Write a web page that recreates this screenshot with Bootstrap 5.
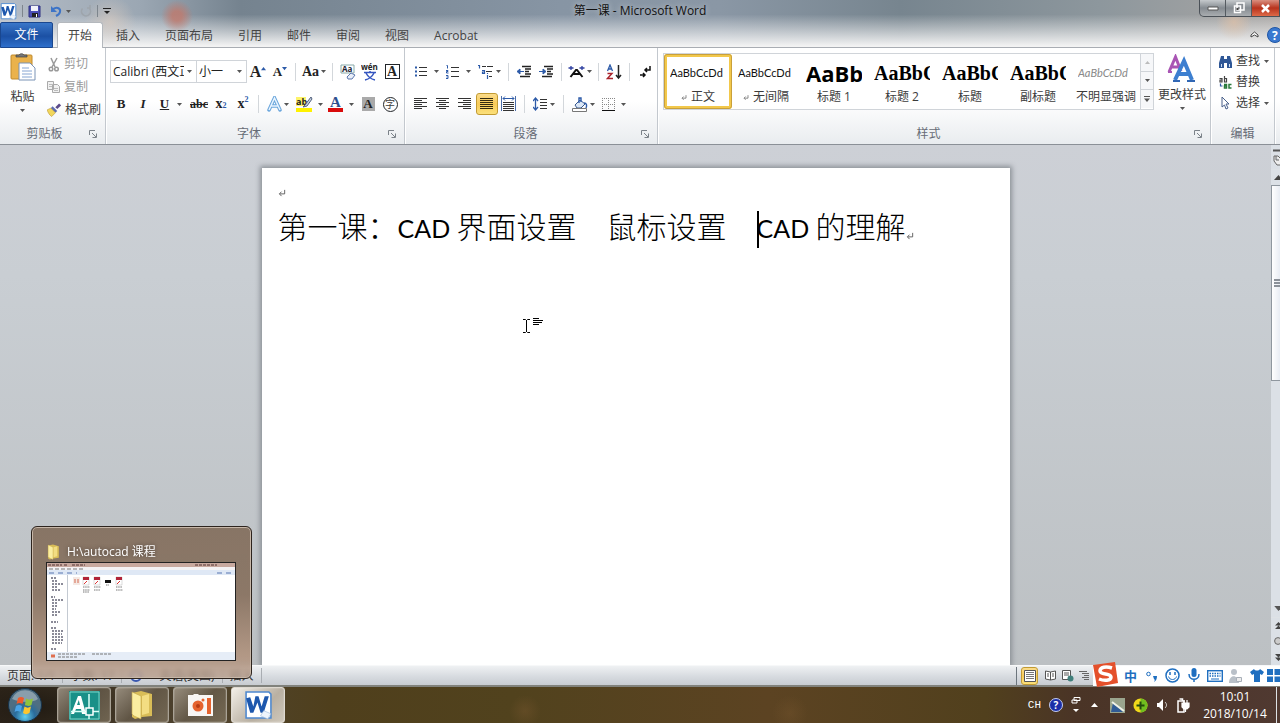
<!DOCTYPE html>
<html lang="zh-CN">
<head>
<meta charset="utf-8">
<meta name="viewport" content="width=device-width, initial-scale=1">
<title>第一课 - Microsoft Word</title>
<link rel="stylesheet" href="https://cdn.jsdelivr.net/npm/bootstrap@5.3.0/dist/css/bootstrap.min.css">
<style>
body{font:12px/16px "Open Sans","Noto Sans CJK SC",sans-serif;color:#3b3b3b;background:#c4c8cd}
button{font:inherit;color:inherit;background:none;border:0;padding:0;white-space:nowrap}
svg{display:block;flex:none}
.chrome{background:
 radial-gradient(circle 16px at 177px 16px,#c0796ccc 30%,transparent),
 radial-gradient(circle 26px at 110px 22px,#d9cbc0aa,transparent),
 radial-gradient(circle 18px at 1234px 22px,#e0c0a5aa,transparent),
 linear-gradient(#fff0 30%,#f3f3f3 96%),
 linear-gradient(90deg,#b4bcc6 0,#9ba7b3 140px,#75838f 240px,#8795a4 560px,#8a97a5 720px,#77858f 900px,#8d979d 1100px,#a9a6a4 100%)}
.titlebar{height:22px}
.qat{gap:5px}
.qat .split{width:1px;height:12px;background:#7d858d}
.title-text{text-shadow:0 0 6px #fff9;color:#111}
.win-ctl{height:17px;border:1px solid #4b5158;border-top:0;border-radius:0 0 0 5px;overflow:hidden;background:linear-gradient(#c5c9cc,#858b91 50%,#a9adb0)}
.win-ctl button{width:26px;height:16px;border-right:1px solid #555b61}
.win-ctl button.shut{width:27px;border:0;background:linear-gradient(#d98f80,#b8331d 50%,#dd6a48)}
.tabs-row{height:26px;border-bottom:1px solid #a9adb3;gap:1px}
.tabs-row .tab{height:26px;padding:2px 12px 0;color:#444}
.tabs-row .file{background:linear-gradient(#3a77c9,#1b50a4 55%,#2e6fcb);color:#fff;width:53px;border-radius:2px 2px 0 0;padding:0;border:1px solid #1a478f}
.tabs-row .on{background:#fff;border:1px solid #b4b8bd;border-bottom:0;border-radius:3px 3px 0 0;width:46px;padding:0;margin-left:3px}
.ribbon{height:97px;background:linear-gradient(#fff 0,#fff 55%,#e9ecef 100%);border-bottom:1px solid #8b9097;overflow:hidden}
.grp{border-right:1px solid #c3c8ce;box-shadow:1px 0 #fff}
.grp-name{height:18px;color:#666c76}
.launch{width:16px;height:16px}
.ic{width:22px;height:22px}
.ic2{width:32px;height:22px;gap:2px}
.ic,.ic2{display:flex;align-items:center;justify-content:center;flex:none}
.w28{width:28px}.w30{width:30px}
.vr-s{width:1px;height:18px;background:#d3d7db;flex:none}
.pressed{background:linear-gradient(#fbdc8b,#f8cb58 50%,#fbe07b);border:1px solid #c29b33;border-radius:3px}
.serif{font-family:"Liberation Serif","Noto Sans CJK SC",serif;font-weight:700;color:#222}
.combo{appearance:none;height:23px;border:1px solid #d0d4d9;background:#fff url("data:image/svg+xml,%3Csvg xmlns='http://www.w3.org/2000/svg' width='5' height='3'%3E%3Cpath d='M0 0h5L2.500 3z' fill='%23555'/%3E%3C/svg%3E") no-repeat right 4px center;padding:0 12px 0 2px;font:inherit;color:#222;border-radius:0}
.dim{color:#9a9a9a}
.gallery{height:57px;border:1px solid #d0d4d9;background:#fff;margin-top:5px}
.sty{width:68px;height:55px;padding:5px 6px 4px;display:flex;flex-direction:column;align-items:center;justify-content:space-between;overflow:hidden}
.sty b,.sty i,.sty .pv{display:flex;align-items:center;width:56px;height:27px;overflow:hidden;font-family:Lato,sans-serif;font-size:11px;color:#111;font-weight:400}
.sty .h1p{font-family:"Open Sans",sans-serif;font-weight:700;font-size:22px;color:#000}
.sty .h2p{font-family:"Liberation Serif",serif;font-weight:700;font-size:20px;color:#000}
.sty i{color:#888}
.sty.sel{border:3px solid #f2c84b;outline:1px solid #c9a03a;outline-offset:-1px;border-radius:3px;padding:2px 3px 1px}
.gal-nav{width:13px;border-left:1px solid #d0d4d9}
.gal-nav button{height:18px;border-bottom:1px solid #d0d4d9;background:#f6f7f9}
.gal-nav button:last-child{border:0}
.work{background:linear-gradient(#cdd0d6,#c9ced3 25%,#bcc0c3);min-height:0}
.sheet{max-width:748px;margin:23px auto 0;background:#fff;box-shadow:0 0 5px 2px #8b9096;padding:16px}
.doc-line{font:300 30px/42px "Noto Sans CJK SC",sans-serif;color:#000;white-space:nowrap;margin:4px 0 0}
.doc-line .lat{font-family:Lato,sans-serif;font-size:25px;font-weight:400}
.ins{display:inline-block;width:2px;height:37px;background:#000;vertical-align:middle;margin-right:-2px}
.pm{display:inline-block;vertical-align:-2px}
.ibeam{position:absolute;left:260px;top:148px}
.vscroll{width:9px;background:#dbe0e6;overflow:hidden;flex:none}
.vscroll .thumb{height:196px;border:1px solid #8f979f;border-right:0;background:linear-gradient(90deg,#fff,#e8ecf3)}
.sb{width:14px;display:flex;align-items:center;justify-content:center;flex:none}
.status{height:20px;background:linear-gradient(#eff1f3,#d5d9de 60%,#c8ccd1);border-top:1px solid #f7f8f9;color:#333}
.status .cell{padding:0 7px;border-right:1px solid #a9adb2;height:15px;display:flex;align-items:center}
.vw{width:17px;height:18px;display:flex;align-items:center;justify-content:center}
.ime{background:#fff;height:20px;width:187px;color:#1f6fc0;padding-left:27px}
.ime button{width:21px;flex:none;display:flex;justify-content:center;font-size:14px;font-weight:700}
.sogou{position:absolute;left:-1px;top:-5px}
.taskbar{height:38px;background:
 radial-gradient(ellipse 90px 40px at 40px 20px,#0006,#0000),
 radial-gradient(circle 16px at 525px 24px,#7a583066,#0000),
 radial-gradient(circle 18px at 790px 26px,#7a583055,#0000),
 linear-gradient(90deg,#33291d 0,#50442f 16%,#4f3f1c 26%,#51421d 40%,#5c4322 60%,#51401d 77%,#4a3426 84%,#503931);
 border-top:2px solid #81827c;color:#fff}
.tk{width:54px;height:36px;border:1px solid #a9a295;border-radius:3px;background:linear-gradient(135deg,#aaa091cc,#6a5f4fbb 50%,#827661bb);display:flex;align-items:center;justify-content:center;box-shadow:inset 0 0 1px #fff}
.tk.cur{background:linear-gradient(135deg,#f3efe8,#b9b0a2 60%,#cfc8bb);border-color:#ded9d0}
.orb{width:49px}
.tray{gap:8px}
.clock{width:66px;line-height:17px}
.peek{position:absolute;left:31px;bottom:44px;width:221px;height:153px;border:1px solid #2d241e;border-radius:6px;box-shadow:inset 0 0 0 1px #c7b7a8;background:linear-gradient(#857262f8,#8b7564f8 45%,#b29683f8 85%,#b69d8bcc);backdrop-filter:blur(2px);padding:15px 14px;color:#fff}
.peek-name{text-shadow:0 0 4px #0008;height:20px;gap:6px}
.mini{border:1px solid #222;background:#fff;height:99px;width:190px}
</style>
</head>
<body class="d-flex flex-column vh-100 overflow-hidden position-relative">
<svg width="0" height="0" class="position-absolute">
 <symbol id="dn" viewBox="0 0 5 3"><path d="M0 0h5L2.500 3z" fill="#555"/></symbol>
 <symbol id="la" viewBox="0 0 8 8"><path d="M.5 5V.5H6M3 3l4 4M7.500 3.500v4h-4" fill="none" stroke="#7b8289"/></symbol>
 <symbol id="ret" viewBox="0 0 9 9"><path d="M7.500 1v4.500H2M4 3L1.500 5.500 4 8" fill="none" stroke="#555"/></symbol>
 <symbol id="fold" viewBox="0 0 24 30"><path d="M2 3l9-2 11 3v22l-10 1-7 2-3-2z" fill="#d9bd57"/><path d="M2 2l9 4v23l-7-3-2-2z" fill="#fbeea0" stroke="#c3a646" stroke-width=".6"/><path d="M12 6l7-2v19l-7 2z" fill="#f3dd82"/></symbol>
 <symbol id="word" viewBox="0 0 28 28"><path d="M2 1h22l2 2v23H2z" fill="#fff" stroke="#4d88cf" stroke-width="1.500"/><path d="M2 7l4 14h3l4-10 3 10h3l5-16h-4l-3 10-3-10h-3L9 15 6 6z" fill="#1d57ad"/><path d="M19 19l7 3-3 5-7-3z" fill="#eef4fb" stroke="#9db9dc" stroke-width=".6"/></symbol>
</svg>

<header class="chrome flex-shrink-0">
 <div class="titlebar d-flex align-items-start justify-content-between position-relative">
  <div class="qat d-flex align-items-center h-100">
   <svg width="17" height="17"><use href="#word"/></svg>
   <span class="split"></span>
   <button aria-label="保存"><svg width="13" height="13" viewBox="0 0 13 13"><path d="M1 1h11v11H1z" fill="#4b4fb5" stroke="#2d2f80"/><path d="M3 1h7v5H3z" fill="#f1f3fa"/><path d="M4 8h6v4H4z" fill="#222"/><path d="M8 9h1v3H8z" fill="#fff"/></svg></button>
   <button class="d-flex align-items-center gap-1 ms-1" aria-label="撤销"><svg width="12" height="12" viewBox="0 0 12 12"><path d="M2 5c4-4 9-2 8 2-.4 2-2 3-4 4" fill="none" stroke="#3d74c7" stroke-width="2"/><path d="M1 1v6h6z" fill="#3d74c7"/></svg><svg width="5" height="3"><use href="#dn"/></svg></button>
   <button class="ms-1" aria-label="重复"><svg width="12" height="12" viewBox="0 0 12 12"><path d="M2.500 3.500a4.500 4.500 0 1 0 7 0M7 3h3V0" fill="none" stroke="#9ea5ac" stroke-width="1.600"/></svg></button>
   <span class="split"></span>
   <button aria-label="自定义快速访问工具栏"><svg width="8" height="8" viewBox="0 0 8 8"><path d="M0 1.500h8" stroke="#222"/><path d="M1 4h6L4 7z" fill="#222"/></svg></button>
  </div>
  <div class="title-text position-absolute start-50 translate-middle-x" style="top:3px">第一课 - Microsoft Word</div>
  <div class="win-ctl d-flex">
   <button class="d-flex align-items-center justify-content-center" aria-label="最小化"><svg width="12" height="5" viewBox="0 0 12 5"><path d="M1 1h10v3H1z" fill="#fff" stroke="#555"/></svg></button>
   <button class="d-flex align-items-center justify-content-center" aria-label="还原"><svg width="12" height="12" viewBox="0 0 12 12"><path d="M4 1h7v7H4zM1.500 4h6v6.500h-6z" fill="#8a8f94" stroke="#fff" stroke-width="1.500"/><path d="M3.500 6h2v2h-2z" fill="#444"/></svg></button>
   <button class="shut d-flex align-items-center justify-content-center" aria-label="关闭"><svg width="11" height="9" viewBox="0 0 11 9"><path d="M2 1l7 7M9 1L2 8" stroke="#fff" stroke-width="2.500"/></svg></button>
  </div>
 </div>
 <nav class="tabs-row d-flex">
  <button class="tab file">文件</button>
  <button class="tab on">开始</button>
  <button class="tab">插入</button><button class="tab">页面布局</button><button class="tab">引用</button><button class="tab">邮件</button><button class="tab">审阅</button><button class="tab">视图</button><button class="tab">Acrobat</button>
  <div class="ms-auto d-flex align-items-center gap-2">
   <button aria-label="折叠功能区"><svg width="9" height="7" viewBox="0 0 9 7"><path d="M1 4l3.500-3L8 4v2L4.500 4 1 6z" fill="#fff" stroke="#444"/></svg></button>
   <button aria-label="帮助"><svg width="13" height="16" viewBox="0 0 13 16"><circle cx="8" cy="8" r="7.500" fill="#3a78cf" stroke="#1f56a5"/><text x="5" y="12.500" font-size="12" font-weight="700" fill="#fff">?</text></svg></button>
  </div>
 </nav>
</header>

<section class="ribbon d-flex flex-shrink-0">
 <div class="grp d-flex flex-column justify-content-between flex-shrink-0" style="width:106px">
  <div class="d-flex">
   <button class="d-flex flex-column align-items-center pt-1" style="width:45px">
    <svg width="26" height="30" viewBox="0 0 26 30"><rect x="1" y="3" width="21" height="24" rx="1" fill="#eab24c" stroke="#c08a2c"/><path d="M6 5V3h3a3 3 0 0 1 5 0h3v2z" fill="#777" stroke="#444" stroke-width=".7"/><path d="M9 11h11l5 5v12H9z" fill="#fff" stroke="#7b93b5"/><path d="M12 16h7M12 19h10M12 22h10M12 25h10" stroke="#86a5d2"/></svg>
    <span class="pt-1" style="margin-top:3px">粘贴</span><svg width="5" height="3" class="mt-1"><use href="#dn"/></svg>
   </button>
   <div class="d-flex flex-column" style="gap:7px;padding:8px 0 0 2px">
    <button class="d-flex align-items-center gap-1 dim"><svg width="13" height="15" viewBox="1 0 13 15"><path d="M5 1l4 9M11 1L6 10" stroke="#999" stroke-width="1.500"/><g fill="none" stroke="#999" stroke-width="1.500"><circle cx="5" cy="12" r="1.800"/><circle cx="10.500" cy="12" r="1.800"/></g></svg>剪切</button>
    <button class="d-flex align-items-center gap-1 dim"><svg width="13" height="14" viewBox="1 0 13 14"><path d="M1.500 1.500h6v8h-6zM6.500 4.500h5l2 2v6h-7z" fill="#f1f1f1" stroke="#aaa"/><path d="M8 8.500h4M8 10.500h4M3 4.500h3M3 6.500h3" stroke="#bbb"/></svg>复制</button>
    <button class="d-flex align-items-center gap-1"><svg width="14" height="14" viewBox="0 0 15 14"><path d="M14 1l-4 4" stroke="#5b4a8a" stroke-width="3"/><path d="M6 3l5 5-2 2-5-5z" fill="#5d6db0"/><path d="M4 5l5 5-4 4C2 12 1 9 0 7z" fill="#f2d75c" stroke="#b8942c" stroke-width=".6"/></svg>格式刷</button>
   </div>
  </div>
  <div class="grp-name d-flex"><span class="flex-grow-1 text-center">剪贴板</span><button class="launch"><svg width="8" height="8"><use href="#la"/></svg></button></div>
 </div>

 <div class="grp d-flex flex-column justify-content-between flex-shrink-0" style="width:299px;padding-left:4px">
  <div class="d-flex flex-column" style="gap:10px;padding-top:12px">
   <div class="d-flex align-items-center" style="height:23px">
    <select class="combo" style="width:87px" aria-label="字体"><option>Calibri (西文正文)</option></select>
    <select class="combo border-start-0" style="width:50px" aria-label="字号"><option>小一</option></select>
    <button class="ic serif fs-6" aria-label="增大字体">A<svg width="5" height="12" viewBox="0 0 6 12"><path d="M0 4h6L3 0z" fill="#2c5aa8"/></svg></button>
    <button class="ic serif" aria-label="缩小字体" style="font-size:13px">A<svg width="5" height="12" viewBox="0 0 6 12"><path d="M0 0h6L3 4z" fill="#2c5aa8"/></svg></button>
    <span class="vr-s mx-1"></span>
    <button class="ic2 w28 serif" style="font-size:14px">Aa<svg width="5" height="3"><use href="#dn"/></svg></button>
    <span class="vr-s mx-1"></span>
    <button class="ic" aria-label="清除格式"><svg width="16" height="16" viewBox="0 0 16 16"><path d="M1 1h13v8H1z" fill="#fff" stroke="#8aa"/><text x="2" y="8" font-size="8" font-weight="700" fill="#223">Aa</text><path d="M7 13l4-4 4 2-3 4H8z" fill="#e9eef8" stroke="#5b77ae"/></svg></button>
    <button class="ic" aria-label="拼音指南"><svg width="18" height="18" viewBox="0 0 18 18"><text x="0" y="7" font-size="8" font-weight="700" fill="#222">wén</text><path d="M3 9.500h12M9 8v2M5 10c2 4 5 6 9 7M13 10c-2 4-5 6-9 7" stroke="#3556c0" fill="none" stroke-width="1.500"/></svg></button>
    <button class="ic" aria-label="字符边框"><span class="serif border border-dark d-flex align-items-center justify-content-center" style="width:15px;height:15px;font-size:14px">A</span></button>
   </div>
   <div class="d-flex align-items-center" style="height:22px">
    <button class="ic serif" style="font-size:13px">B</button><button class="ic serif fst-italic" style="font-size:13px">I</button>
    <button class="ic2 serif" style="font-size:13px;gap:8px;width:34px"><u>U</u><svg width="5" height="3"><use href="#dn"/></svg></button>
    <button class="ic serif"><s>abc</s></button>
    <button class="ic serif" style="font-size:14px">x<sub style="font-size:8px;color:#2c5aa8">2</sub></button><button class="ic serif" style="font-size:14px">x<sup style="font-size:8px;color:#2c5aa8">2</sup></button>
    <span class="vr-s mx-1"></span>
    <button class="ic2 w30" aria-label="文本效果"><svg width="15" height="16" viewBox="0 0 15 16"><path d="M2 14L7.500 2 13 14M4.500 10h6" fill="none" stroke="#6aa6dc" stroke-width="3.500" stroke-linecap="round"/><path d="M2 14L7.500 2 13 14M4.500 10h6" fill="none" stroke="#eaf5ff" stroke-width="1.500"/></svg><svg width="5" height="3"><use href="#dn"/></svg></button>
    <button class="ic2" aria-label="突出显示" style="gap:5px"><svg width="17" height="17" viewBox="0 0 17 17"><path d="M0 1h10v9H0z" fill="#fdf36b"/><text x="0" y="9" font-size="9" font-weight="700" fill="#222">ab</text><path d="M15 1L9 9l-2 2 4-1 5-7z" fill="#c7d2e2" stroke="#52617c"/><path d="M0 12h16v4H0z" fill="#fff200"/></svg><svg width="5" height="3"><use href="#dn"/></svg></button>
    <button class="ic2" aria-label="字体颜色" style="gap:5px"><svg width="16" height="17" viewBox="0 0 16 17"><text x="2" y="11" font-family="Liberation Serif" font-size="15" font-weight="700" fill="#2d4f8e">A</text><path d="M0 12h15v4H0z" fill="#d90b0b"/></svg><svg width="5" height="3"><use href="#dn"/></svg></button>
    <button class="ic"><span class="serif" style="background:#aaa;width:13px;height:14px;line-height:14px;font-size:13px">A</span></button>
    <button class="ic"><span class="rounded-circle border border-dark d-flex align-items-center justify-content-center" style="width:15px;height:15px;font-size:10px;line-height:13px">字</span></button>
   </div>
  </div>
  <div class="grp-name d-flex"><span class="flex-grow-1 text-center">字体</span><button class="launch"><svg width="8" height="8"><use href="#la"/></svg></button></div>
 </div>

 <div class="grp d-flex flex-column justify-content-between flex-shrink-0" style="width:253px;padding-left:5px">
  <div class="d-flex flex-column" style="gap:10px;padding-top:12px">
   <div class="d-flex align-items-center" style="height:23px">
    <button class="ic2" aria-label="项目符号"><svg width="14" height="13" viewBox="0 0 14 13"><path d="M1 2.500h2M1 6.500h2M1 10.500h2" stroke="#2c5aa8" stroke-width="2"/><path d="M5 2.500h8M5 6.500h8M5 10.500h8" stroke="#333"/></svg><svg width="5" height="3" class="ms-1"><use href="#dn"/></svg></button>
    <button class="ic2" aria-label="编号"><svg width="14" height="15" viewBox="0 0 14 15"><g fill="none" stroke="#2c5aa8"><path d="M.5 1.500h1v3M0 6.500h2v1H.5v1.500h2M0 11.500h2v3H0M.5 13h1"/></g><path d="M5 3.500h8M5 7.500h8M5 12.500h8" stroke="#333"/></svg><svg width="5" height="3" class="ms-1"><use href="#dn"/></svg></button>
    <button class="ic2 w30" aria-label="多级列表"><svg width="16" height="15" viewBox="0 0 16 15"><path d="M0 1.500h1.500v3M4 6.500h2.500v3H4.500V8h2M9.500 11v4M9.500 9v1" fill="none" stroke="#2c5aa8" stroke-width="1.200"/><path d="M4 2.500h4M9 2.500h6M8 7.500h6M11 12.500h3" stroke="#333"/></svg><svg width="5" height="3"><use href="#dn"/></svg></button>
    <span class="vr-s ms-1"></span>
    <button class="ic ms-1" aria-label="减少缩进"><svg width="15" height="13" viewBox="0 0 15 13"><path d="M5 1.500h9M8 4h6M8 6.500h4M8 9h6M3 11.500h10" stroke="#222" stroke-width="1.300"/><path d="M7 6.500H3V4L0 6.500 3 9V6.500" fill="#2c5aa8" stroke="#2c5aa8"/></svg></button>
    <button class="ic" aria-label="增加缩进"><svg width="15" height="13" viewBox="0 0 15 13"><path d="M5 1.500h9M8 4h6M8 6.500h4M8 9h6M3 11.500h10" stroke="#222" stroke-width="1.300"/><path d="M0 6.500h4V4l3 2.500L4 9V6.500" fill="#2c5aa8" stroke="#2c5aa8"/></svg></button>
    <span class="vr-s mx-1"></span>
    <button class="ic2 w28" aria-label="中文版式"><svg width="17" height="14" viewBox="0 0 16 14"><path d="M2 12L7.500 5h1L14 12M5 9h6" fill="none" stroke="#111" stroke-width="2"/><path d="M0 3h5M2.500 1v4M11 3h5M13.500 1v4" stroke="#2d3fa0" stroke-width="1.300"/></svg><svg width="5" height="3"><use href="#dn"/></svg></button>
    <span class="vr-s mx-1"></span>
    <button class="ic" aria-label="排序"><svg width="16" height="16" viewBox="0 0 16 16"><path d="M1.500 7L4 1l2.500 6M2.500 5h3" fill="none" stroke="#2c5aa8" stroke-width="1.300"/><path d="M1.500 9.500H6l-4.500 5H7" fill="none" stroke="#a8232c" stroke-width="1.400"/><path d="M12.500 1v12M10 11l2.500 3 2.500-3" stroke="#222" fill="none" stroke-width="1.500"/></svg></button>
    <span class="vr-s mx-1"></span>
    <button class="ic" aria-label="显示编辑标记"><svg width="13" height="13" viewBox="0 0 13 13"><path d="M11 1v4H6M8 3L6 5l2 2M1 10h5M4 8l2 2-2 2" fill="none" stroke="#111" stroke-width="1.500"/></svg></button>
   </div>
   <div class="d-flex align-items-center" style="height:22px">
    <button class="ic" aria-label="左对齐"><svg width="14" height="12" viewBox="0 0 14 12"><path d="M0 .5h13M0 2.500h8M0 4.500h13M0 6.500h8M0 8.500h13M0 10.500h8" stroke="#333"/></svg></button>
    <button class="ic" aria-label="居中"><svg width="14" height="12" viewBox="0 0 14 12"><path d="M0 .5h13M3 2.500h7M0 4.500h13M3 6.500h7M0 8.500h13M3 10.500h7" stroke="#333"/></svg></button>
    <button class="ic" aria-label="右对齐"><svg width="14" height="12" viewBox="0 0 14 12"><path d="M0 .5h13M5 2.500h8M0 4.500h13M5 6.500h8M0 8.500h13M5 10.500h8" stroke="#333"/></svg></button>
    <button class="ic pressed" aria-label="两端对齐"><svg width="14" height="12" viewBox="0 0 14 12"><path d="M0 .5h13M0 2.500h13M0 4.500h13M0 6.500h13M0 8.500h13M0 10.500h13" stroke="#332a10"/></svg></button>
    <button class="ic" aria-label="分散对齐"><svg width="16" height="16" viewBox="0 0 16 16"><path d="M.5 0v15M14.500 0v15" stroke="#4b6ea9"/><path d="M2 2.500h11M4 .5l-2 2 2 2M11 .5l2 2-2 2" fill="none" stroke="#2c5aa8"/><path d="M2 6.500h11M2 8.500h11M2 10.500h11M2 12.500h11M2 14.500h11" stroke="#333"/></svg></button>
    <span class="vr-s mx-1"></span>
    <button class="ic2 w30" aria-label="行距"><svg width="15" height="14" viewBox="0 0 15 14"><path d="M2.500 1v12M0 4l2.500-3L5 4M0 10l2.500 3L5 10" fill="none" stroke="#2c5aa8" stroke-width="1.300"/><path d="M7 2.500h7M7 5.500h7M7 8.500h7M7 11.500h7" stroke="#333"/></svg><svg width="5" height="3"><use href="#dn"/></svg></button>
    <span class="vr-s mx-1"></span>
    <button class="ic2 w30" aria-label="底纹"><svg width="16" height="15" viewBox="0 0 16 15"><path d="M3 8l5-5 5 4-4 4H5z" fill="#dbe7f6" stroke="#38588e"/><path d="M7 6V1h2v4M12 6c3 0 3 3 2 5" fill="none" stroke="#2c5aa8" stroke-width="1.400"/><path d="M.5 11.500h14v3H.5z" fill="#fff" stroke="#777"/></svg><svg width="5" height="3"><use href="#dn"/></svg></button>
    <button class="ic2" aria-label="边框"><svg width="13" height="13" viewBox="0 0 13 13"><path d="M0 .5h13M.5 0v12M12.500 0v12M6.500 0v12M0 6.500h13" stroke="#888" stroke-dasharray="1 1"/><path d="M0 12.500h13" stroke="#111"/></svg><svg width="5" height="3" class="ms-1"><use href="#dn"/></svg></button>
   </div>
  </div>
  <div class="grp-name d-flex"><span class="flex-grow-1 text-center">段落</span><button class="launch"><svg width="8" height="8"><use href="#la"/></svg></button></div>
 </div>

 <div class="grp d-flex flex-column justify-content-between flex-grow-1" style="padding-left:5px">
  <div class="d-flex">
   <div class="gallery d-flex">
    <button class="sty sel"><span class="pv">AaBbCcDd</span><span class="d-flex align-items-center gap-1"><svg width="6" height="7"><use href="#ret"/></svg>正文</span></button>
    <button class="sty"><span class="pv">AaBbCcDd</span><span class="d-flex align-items-center gap-1"><svg width="6" height="7"><use href="#ret"/></svg>无间隔</span></button>
    <button class="sty"><b class="h1p">AaBb</b>标题 1</button>
    <button class="sty"><b class="h2p">AaBbC</b>标题 2</button>
    <button class="sty"><b class="h2p">AaBbC</b>标题</button>
    <button class="sty"><b class="h2p">AaBbC</b>副标题</button>
    <button class="sty"><i>AaBbCcDd</i>不明显强调</button>
    <div class="gal-nav d-flex flex-column">
     <button class="d-flex align-items-center justify-content-center" aria-label="上一行"><svg width="5" height="3" viewBox="0 0 5 3"><path d="M0 3h5L2.500 0z" fill="#bbb"/></svg></button>
     <button class="d-flex align-items-center justify-content-center" aria-label="下一行"><svg width="5" height="3"><use href="#dn"/></svg></button>
     <button class="d-flex align-items-center justify-content-center" aria-label="其他"><svg width="6" height="6" viewBox="0 0 6 6"><path d="M0 .5h6" stroke="#555"/><path d="M0 2.500h6L3 6z" fill="#555"/></svg></button>
    </div>
   </div>
   <button class="d-flex flex-column align-items-center flex-grow-1" style="padding-top:6px"><svg width="30" height="30" viewBox="0 0 30 30"><path d="M2 18L8.500 3 14 17M4.500 13h8" fill="none" stroke="#a955b4" stroke-width="3"/><path d="M1 18h4" stroke="#a955b4" stroke-width="2"/><path d="M8 26L17 7l8 19M11 20h11" fill="none" stroke="#3d7fd0" stroke-width="4"/><path d="M6 27h7M20 27h8" stroke="#3167b4" stroke-width="2"/></svg><span style="margin-top:3px">更改样式</span><svg width="5" height="3" class="mt-1"><use href="#dn"/></svg></button>
  </div>
  <div class="grp-name d-flex"><span class="flex-grow-1 text-center">样式</span><button class="launch"><svg width="8" height="8"><use href="#la"/></svg></button></div>
 </div>

 <div class="grp d-flex flex-column justify-content-between flex-shrink-0" style="width:64px">
  <div class="d-flex flex-column ps-2" style="gap:5px;padding-top:5px">
   <button class="d-flex align-items-center gap-1"><svg width="13" height="13" viewBox="0 0 13 13"><path d="M2 1h3v3h3V1h3l2 7v5H8V8H5v5H0V8z" fill="#2f5796"/><path d="M2 9h1v3H2zM10 9h1v3h-1z" fill="#cfe0f5"/></svg>查找<svg width="5" height="3"><use href="#dn"/></svg></button>
   <button class="d-flex align-items-center gap-1"><svg width="13" height="15" viewBox="0 0 13 15"><g fill="none" stroke-width="1.200"><path d="M.5 3.500h2.500v3.500H1V5h2M5.500 1v6h2V3.500h-2" stroke="#444"/><path d="M5 9.500h2.500V13H5.500v-2h2M12.500 9.500H10V13h2.500" stroke="#2a7a3c" stroke-width="1.500"/><path d="M1.500 8.500V11h2" stroke="#2c5aa8"/></g></svg>替换</button>
   <button class="d-flex align-items-center gap-1"><svg width="13" height="14" viewBox="0 0 13 14"><path d="M3 1v10l2.500-2L7 13l2-1-2-4h3z" fill="#fff" stroke="#4a618b"/></svg>选择<svg width="5" height="3"><use href="#dn"/></svg></button>
  </div>
  <div class="grp-name text-center">编辑</div>
 </div>
 <div style="width:5px" class="flex-shrink-0"></div>
</section>

<main class="work d-flex flex-grow-1">
 <div class="flex-grow-1 d-flex overflow-hidden">
  <article class="sheet flex-grow-1 position-relative">
   <div style="height:16px;padding:5px 0 0 0"><svg width="8" height="8"><use href="#ret"/></svg></div>
   <p class="doc-line">第一课：<span class="lat">CAD </span>界面设置　鼠标设置　<span class="ins"></span><span class="lat">CAD </span>的理解<svg class="pm" width="8" height="8"><use href="#ret"/></svg></p>
   <svg class="ibeam" width="24" height="20" viewBox="0 0 24 20"><path d="M1 3.500h2.500l1 1 1-1H8M4.500 4v12M1 16.500h2.500l1-1 1 1H8" fill="none" stroke="#000"/><path d="M11 2.500h6M11 4.500h10M11 6.500h9M11 8.500h6" stroke="#000"/></svg>
  </article>
 </div>
 <div class="vscroll d-flex flex-column">
  <div class="sb border-bottom" style="height:25px"><svg width="12" height="20" viewBox="0 0 12 20"><path d="M1 3.500h11" stroke="#555" stroke-width="2"/><path d="M2 9h4l6 6v3H5l-3-4zM4 9v4h3" fill="#eee" stroke="#666"/></svg></div>
  <div class="sb" style="height:15px"><svg width="9" height="5" viewBox="0 0 9 5"><path d="M0 5h9L4.500 0z" fill="#444"/></svg></div>
  <div class="thumb d-flex align-items-center justify-content-end"><svg width="6" height="8" viewBox="0 0 6 8"><path d="M0 1h7M0 4h7M0 7h7" stroke="#8b9199" stroke-width="2"/></svg></div>
  <div class="flex-grow-1"></div>
  <div class="sb" style="height:18px"><svg width="9" height="5"><use href="#dn"/></svg></div>
  <div class="sb border-top" style="height:15px"><svg width="7" height="7" viewBox="0 0 7 7"><path d="M0 3.500L3.500 0 7 3.500zM0 7l3.500-3.500L7 7z" fill="#444"/></svg></div>
  <div class="sb" style="height:17px"><svg width="8" height="8" viewBox="0 0 8 8"><circle cx="4" cy="4" r="3.400" fill="#ccc" stroke="#666"/></svg></div>
  <div class="sb" style="height:16px"><svg width="7" height="7" viewBox="0 0 7 7"><path d="M0 0h7L3.500 3.500zM0 3.500h7L3.500 7z" fill="#444"/></svg></div>
 </div>
</main>

<footer class="status d-flex align-items-center flex-shrink-0">
 <div class="cell">页面: 1/1</div><div class="cell">字数: 17</div>
 <div class="cell gap-3"><svg width="14" height="14" viewBox="0 0 14 14"><circle cx="7" cy="7" r="5" fill="#e8eefa" stroke="#3a58b0" stroke-width="2"/></svg><span>英语(美国)</span></div><div class="cell">插入</div>
 <div class="ms-auto d-flex align-items-center">
  <span class="vr-s me-1 bg-secondary"></span>
  <button class="vw pressed me-1" aria-label="页面视图"><svg width="12" height="12" viewBox="0 0 12 12"><path d="M.5.5h11v11H.5z" fill="#fff" stroke="#555"/><path d="M2 2.500h8M2 4.500h8M2 6.500h8M2 8.500h8" stroke="#777"/></svg></button>
  <button class="vw" aria-label="阅读版式"><svg width="11" height="11" viewBox="0 0 11 11"><path d="M.5 1l5 1 5-1v8l-5 1-5-1zM5.500 2v8M2 4h2M2 6h2M7 4h2M7 6h2" fill="#fff" stroke="#555"/></svg></button>
  <button class="vw" aria-label="Web 版式"><svg width="12" height="12" viewBox="0 0 12 12"><path d="M.5.5h8v9h-8zM2 3h5M2 5h5" fill="#fff" stroke="#555"/><circle cx="8.500" cy="8.500" r="3" fill="#3f7f7b"/></svg></button>
  <button class="vw" aria-label="大纲视图"><svg width="11" height="10" viewBox="0 0 11 10"><path d="M0 .5h8M3 2.500h7M5 4.500h5M3 6.500h7M5 8.500h5" stroke="#666"/></svg></button>
 </div>
 <div class="ime d-flex align-items-center position-relative overflow-visible">
  <svg class="sogou" width="27" height="27" viewBox="0 0 27 27"><path d="M1 4l22-3 3 21-21 4z" fill="#e4502b"/><path d="M20 7c-6-2-12-1-12 3s11 2 11 6-7 4-12 2" fill="none" stroke="#fff" stroke-width="3.500"/></svg>
  <button style="font-size:13px">中</button>
  <button aria-label="标点"><svg width="12" height="12" viewBox="0 0 12 12"><circle cx="2.500" cy="4" r="1.800" fill="none" stroke="currentColor"/><path d="M7 6h4c0 3-1 5-3 6 1-2 1-2 0-3z" fill="currentColor"/></svg></button>
  <button aria-label="表情"><svg width="15" height="15" viewBox="0 0 15 15"><circle cx="7.500" cy="7.500" r="6.500" fill="none" stroke="currentColor" stroke-width="1.500"/><path d="M5 4v3M10 4v3" stroke="currentColor" stroke-width="1.500"/><path d="M3.500 8.500c1 4 7 4 8 0" fill="none" stroke="currentColor"/></svg></button>
  <button aria-label="语音"><svg width="12" height="15" viewBox="0 0 12 15"><rect x="3.500" y="0" width="5" height="9" rx="2.500" fill="currentColor"/><path d="M1 6c0 7 10 7 10 0M6 11v3" fill="none" stroke="currentColor" stroke-width="1.500"/></svg></button>
  <button aria-label="软键盘"><svg width="16" height="12" viewBox="0 0 16 12"><rect x=".7" y=".7" width="14.600" height="10.600" fill="none" stroke="currentColor" stroke-width="1.400"/><path d="M2.500 3.500h11M2.500 6h11" stroke="currentColor" stroke-width="1.500" stroke-dasharray="1.500 1"/><path d="M4 9h8" stroke="currentColor"/></svg></button>
  <button aria-label="账户"><svg width="14" height="14" viewBox="0 0 14 14"><circle cx="5" cy="3" r="3" fill="#b9c0c8"/><path d="M0 14c0-9 9-9 10 0z" fill="#b9c0c8"/><path d="M7.500 8.500h5v4h-5z" fill="#eee" stroke="#a8afb8"/></svg></button>
  <button aria-label="皮肤"><svg width="14" height="13" viewBox="0 0 14 13"><path d="M4 0c1 2 5 2 6 0l4 3-2 3-2-1v8H4V5L2 6 0 3z" fill="currentColor"/></svg></button>
  <button class="justify-content-start" style="width:13px" aria-label="工具箱"><svg width="13" height="13" viewBox="0 0 13 13"><path d="M0 0h6v6H0zM7.500 0H13v6H7.500zM0 7.500h6V13H0zM7.500 7.500H13V13H7.500z" fill="currentColor"/></svg></button>
 </div>
</footer>

<nav class="taskbar d-flex align-items-center flex-shrink-0">
 <button class="orb d-flex justify-content-center me-2" aria-label="开始"><svg width="36" height="36" viewBox="0 0 36 36"><defs><radialGradient id="ob" cy=".85"><stop offset="0" stop-color="#5fd0f0"/><stop offset=".6" stop-color="#2a6c9c"/><stop offset="1" stop-color="#4f6e82"/></radialGradient></defs><circle cx="18" cy="18" r="16.500" fill="url(#ob)" stroke="#16324a"/><path d="M5 12a14 14 0 0 1 26 0c-8 5-18 3-26 0z" fill="#ffffff55"/><path d="M11 11c2-1.500 4-1.500 6 0l-1.500 6c-2-1.500-4-1.500-6 0z" fill="#ee5a2b"/><path d="M19 11.500c2 1.500 4 1.500 7 0L24.500 18c-2 1.500-5 1-6.500 0z" fill="#8fc43d"/><path d="M9 19c2-1.500 4-1.500 6 0l-1.500 6c-2-1.500-4-1.500-6 0z" fill="#4aa3e6"/><path d="M17.500 19.500c2 1.500 4 1.500 6.500 0L22.500 26c-2 1.500-5 1.500-6.500 0z" fill="#fcc62e"/></svg></button>
 <div class="d-flex gap-1">
  <button class="tk" aria-label="AutoCAD"><svg width="31" height="29" viewBox="0 0 31 29"><path d="M0 0h31v29H0z" fill="#1a9088"/><path d="M1 1h29v27H1z" fill="none" stroke="#7cd5c8"/><path d="M2 23L9 5h3l5 18h-4l-1-5H7l-2 5zM8 14h3L9.800 9z" fill="#fff"/><path d="M20 3v14M20 24v4M2 20.500h15M24 20.500h6" stroke="#d9fff7" stroke-width="1.500"/><path d="M17 17h7v7h-7z" fill="none" stroke="#fff" stroke-width="1.500"/></svg></button>
  <button class="tk" aria-label="文件夹"><svg width="24" height="30"><use href="#fold"/></svg></button>
  <button class="tk" aria-label="录屏"><svg width="27" height="24" viewBox="0 0 27 24"><path d="M1 2h5l1-1h4l1 1h14v21H1z" fill="#f8f6f4"/><circle cx="11" cy="13" r="5.500" fill="#e5632e"/><circle cx="11" cy="13" r="2" fill="#b73b12"/><circle cx="16" cy="7" r="1.500" fill="#e5632e"/><path d="M20 5h4v16h-4z" fill="#e5632e"/></svg></button>
  <button class="tk cur" aria-label="Word"><svg width="29" height="29"><use href="#word"/></svg></button>
 </div>
 <div class="tray ms-auto d-flex align-items-center">
  <span style="font-family:'Liberation Mono',monospace;font-size:11px">CH</span>
  <svg width="14" height="14" viewBox="0 0 14 14"><circle cx="7" cy="7" r="6.500" fill="#1b2fa8" stroke="#c4cdf0"/><text x="4.500" y="11" font-size="10" font-weight="700" fill="#fff">?</text></svg>
  <svg width="10" height="18" viewBox="0 0 10 18"><path d="M3 1.500h6v3H3zM1 4h5v3H1z" fill="#50392c" stroke="#fff"/><path d="M2 13h6l-3 3z" fill="#fff"/></svg>
  <svg width="13" height="4" viewBox="0 0 13 4"><path d="M2 4h7L5.500 0z" fill="#fff"/></svg>
  <svg width="15" height="15" viewBox="0 0 15 15"><path d="M0 0h15v15H0z" fill="#9aa58e"/><path d="M1 14L3 5l10 9z" fill="#315c96"/><path d="M2 4l12 9" stroke="#f0f2e8" stroke-width="2"/></svg>
  <svg width="15" height="15" viewBox="0 0 15 15"><circle cx="7.500" cy="7.500" r="7" fill="#f1d91b"/><path d="M7.500.5a7 7 0 0 1 0 14z" fill="#6fbe1f"/><path d="M3.500 7.500h8M7.500 3.500v8" stroke="#234c0d" stroke-width="2"/></svg>
  <svg width="13" height="14" viewBox="0 0 13 14"><path d="M1 5h2l4-4v12L3 9H1z" fill="#fff"/><path d="M9 4c2 2 2 4 0 6" fill="none" stroke="#ddd"/></svg>
  <svg width="13" height="15" viewBox="0 0 13 15"><path d="M1 3h6v11H1zM2.500 1h3v2" fill="none" stroke="#fff" stroke-width="1.500"/><path d="M5 5h7v4l-2 2H7L5 9zM7 5V2M10 5V2M8.500 11v3" fill="#fff" stroke="#fff" stroke-width="1.200"/></svg>
  <div class="clock text-center ms-1">10:01<br>2018/10/14</div>
  <span class="border-start align-self-stretch" style="width:4px;height:36px"></span>
 </div>
</nav>

<aside class="peek">
 <div class="peek-name d-flex align-items-center"><svg width="15" height="16"><use href="#fold"/></svg>H:\autocad 课程</div>
 <svg class="mini" viewBox="0 0 188 97" preserveAspectRatio="none">
  <path d="M0 0h188v4H0z" fill="#c8a99f"/><path d="M0 4h188v3H0z" fill="#f4f2f4"/><path d="M0 7h188v5H0z" fill="#dfe8f5"/><path d="M0 89h188v8H0z" fill="#e6edf7"/><path d="M20.500 12v77" stroke="#c4cad2"/>
  <path d="M1 2h14M17 2h4M25 2h13M148 2h22" stroke="#533" stroke-dasharray="3 1"/><path d="M2 6h36" stroke="#777" stroke-dasharray="4 2"/><path d="M2 10h28M170 10h15" stroke="#5675b0" stroke-dasharray="5 4"/>
  <path d="M4 15h6M5 18h6M5 21h12M5 24h5M5 27h9M4 34h4M5 37h11M5 40h6M5 43h5M5 46h4M5 49h9M5 52h5M4 59h7M4 65h6M5 68h12M5 71h10M5 74h11M5 77h12M5 80h10M4 86h6" stroke="#667" stroke-width="1.300" stroke-dasharray="2 1"/>
  <path d="M26 14h7v8h-7z" fill="#f5e9e4"/><path d="M28 16v4M31 16v4" stroke="#d5694f"/>
  <g fill="#fff" stroke="#bbb" stroke-width=".5"><path d="M36 14h6v8h-6zM47 14h6v8h-6zM69 14h6v8h-6z"/></g><path d="M36 14h6v3h-6zM47 14h6v3h-6zM69 14h6v3h-6z" fill="#b22438"/><path d="M37 21l3-3M48 21l3-3M70 21l3-3" stroke="#d33"/><path d="M58 17h6v3h-6z" fill="#111"/>
  <path d="M36 24h7M36 27h7M47 24h7M47 27h6M69 24h6M69 27h7M36 29h6M59 22h3" stroke="#777" stroke-dasharray="1.500 .7"/>
  <path d="M4 93h4" stroke="#e07050" stroke-width="3"/><path d="M11 91h28M45 91h20M11 94h20" stroke="#777" stroke-dasharray="3 1"/>
 </svg>
</aside>
<script src="https://cdn.jsdelivr.net/npm/bootstrap@5.3.0/dist/js/bootstrap.bundle.min.js"></script>
</body>
</html>
